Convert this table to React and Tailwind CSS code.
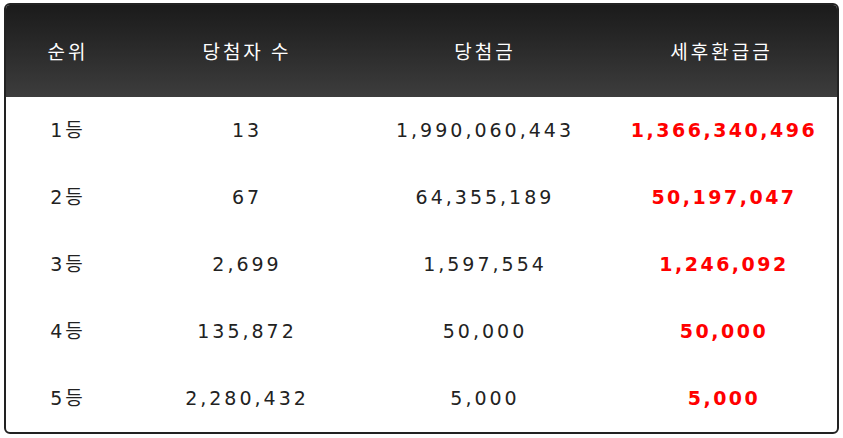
const rows = [
  ["1등", "13", "1,990,060,443", "1,366,340,496"],
  ["2등", "67", "64,355,189", "50,197,047"],
  ["3등", "2,699", "1,597,554", "1,246,092"],
  ["4등", "135,872", "50,000", "50,000"],
  ["5등", "2,280,432", "5,000", "5,000"],
];

const App = () => {
  return (
    <div className="bg-white w-[843px] h-[438px] pt-[3px] pl-[4px] font-['DejaVu_Sans','Noto_Sans_CJK_KR',sans-serif]">
      <div className="w-[835px] h-[431px] border-2 border-[#222] rounded-md overflow-hidden flex flex-col">
        <div className="h-[92px] flex items-center bg-gradient-to-b from-[#1b1b1b] to-[#3d3d3d] text-white text-[19px] tracking-[3px] font-['Noto_Sans_CJK_KR',sans-serif]">
          <div className="w-[124px] text-center">순위</div>
          <div className="w-[234px] text-center">당첨자 수</div>
          <div className="w-[242px] text-center">당첨금</div>
          <div className="flex-1 text-center">세후환급금</div>
        </div>
        <div className="flex-1 flex flex-col text-[19px] tracking-[3px] text-[#222]">
          {rows.map((r) => (
            <div key={r[0]} className="flex-1 flex items-center">
              <div className="w-[124px] text-center">{r[0]}</div>
              <div className="w-[234px] text-center">{r[1]}</div>
              <div className="w-[242px] text-center">{r[2]}</div>
              <div className="flex-1 pl-[5px] text-center font-bold tracking-[2.5px] text-[#ff0000]">{r[3]}</div>
            </div>
          ))}
        </div>
      </div>
    </div>
  );
};

export default App;
